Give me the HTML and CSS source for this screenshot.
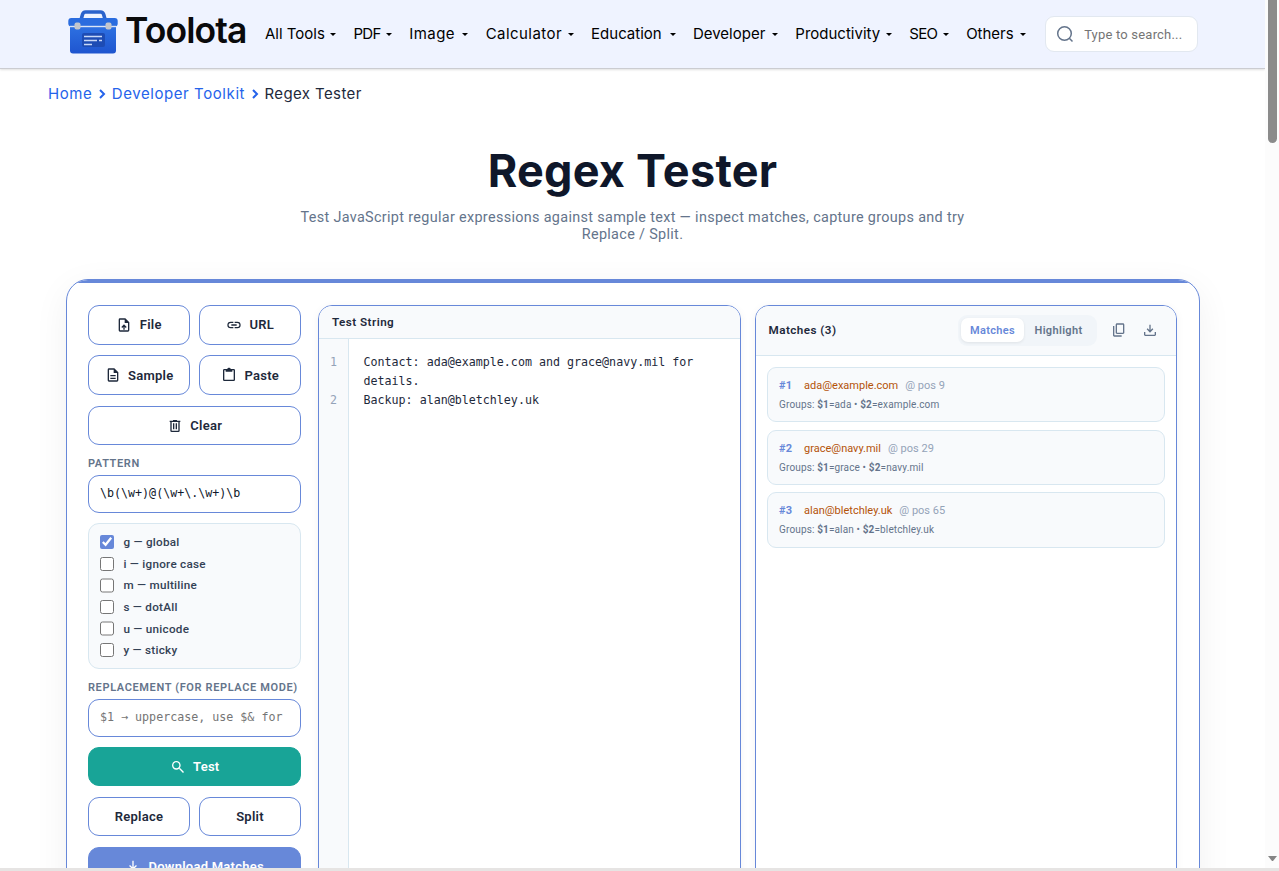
FILE: index.html
```html
<!DOCTYPE html>
<html lang="en">
<head>
    <meta charset="UTF-8">
    <meta name="viewport" content="width=device-width, initial-scale=1.0">
    <title>Regex Tester - Toolota</title>
    <link rel="stylesheet" href="styles.css">
</head>
<body>
    <div class="window">
        <div class="page">
            <header class="site-header">
                <a class="logo" href="#">
                    <svg width="50" height="44" viewBox="0 0 50 44">
                        <defs>
                            <linearGradient id="box" x1="0" y1="0" x2="0" y2="1">
                                <stop offset="0" stop-color="#2f74e4"/>
                                <stop offset="1" stop-color="#1f55cf"/>
                            </linearGradient>
                        </defs>
                        <path d="M13 10L14.500 4.500Q15.200 2 17.500 2h15Q35 2 35.700 4.500L37.200 10" fill="none" stroke="#2a62cc" stroke-width="3.600"/>
                        <rect x="2" y="13" width="46" height="30.500" rx="3" fill="url(#box)"/>
                        <rect x="0.300" y="8" width="49.400" height="8.500" rx="3" fill="#2a6cdf"/>
                        <rect x="2" y="15.800" width="46" height="1.400" fill="#dbe5f6"/>
                        <rect x="14" y="23" width="23" height="14" rx="2" fill="#1d4cb4"/>
                        <rect x="6.500" y="12.500" width="6" height="7" rx="2" fill="#c3c6cc"/>
                        <rect x="37.500" y="12.500" width="6" height="7" rx="2" fill="#c3c6cc"/>
                        <path d="M16 26.500h18M16 30.500h13M31 30.500h3M16 34.500h8" stroke="#c9d9f7" stroke-width="1.300"/>
                    </svg>
                    <span>Toolota</span>
                </a>
                <nav class="main-nav">
                    <a href="#">All Tools</a>
                    <a href="#">PDF</a>
                    <a href="#">Image</a>
                    <a href="#">Calculator</a>
                    <a href="#">Education</a>
                    <a href="#">Developer</a>
                    <a href="#">Productivity</a>
                    <a href="#">SEO</a>
                    <a href="#">Others</a>
                </nav>
                <label class="search">
                    <svg width="18" height="18" viewBox="0 0 18 18" fill="none" stroke="#64748b" stroke-width="1.500">
                        <circle cx="8.500" cy="8.500" r="6.800"/>
                        <path d="M13.300 13.300L16.500 16.500"/>
                    </svg>
                    <input type="text" placeholder="Type to search...">
                </label>
            </header>

            <div class="breadcrumb">
                <a href="#">Home</a>
                <svg width="8" height="10" viewBox="0 0 8 10"><path d="M2 1l4 4-4 4"/></svg>
                <a href="#">Developer Toolkit</a>
                <svg width="8" height="10" viewBox="0 0 8 10"><path d="M2 1l4 4-4 4"/></svg>
                <span>Regex Tester</span>
            </div>

            <section class="hero">
                <h1>Regex Tester</h1>
                <p>Test JavaScript regular expressions against sample text — inspect matches, capture groups and try Replace / Split.</p>
            </section>

            <main class="tool-card">
                <aside class="controls">
                    <div class="btn-grid">
                        <button class="btn">
                            <svg class="icon" viewBox="0 0 24 24"><path d="M14,2L20,8V20A2,2 0 0,1 18,22H6A2,2 0 0,1 4,20V4A2,2 0 0,1 6,2H14M18,20V9H13V4H6V20H18M12,11L16,15L14.600,16.400L13,14.800V19H11V14.800L9.400,16.400L8,15L12,11Z"/></svg>
                            File
                        </button>
                        <button class="btn">
                            <svg class="icon" viewBox="0 0 24 24"><path d="M3.900,12C3.900,10.290 5.290,8.900 7,8.900H11V7H7A5,5 0 0,0 2,12A5,5 0 0,0 7,17H11V15.100H7C5.290,15.100 3.900,13.710 3.900,12M8,13H16V11H8V13M17,7H13V8.900H17C18.710,8.900 20.100,10.290 20.100,12C20.100,13.710 18.710,15.100 17,15.100H13V17H17A5,5 0 0,0 22,12A5,5 0 0,0 17,7Z"/></svg>
                            URL
                        </button>
                        <button class="btn">
                            <svg class="icon" viewBox="0 0 24 24"><path d="M6,2A2,2 0 0,0 4,4V20A2,2 0 0,0 6,22H18A2,2 0 0,0 20,20V8L14,2H6M6,4H13V9H18V20H6V4M8,12V14H16V12H8M8,16V18H16V16H8Z"/></svg>
                            Sample
                        </button>
                        <button class="btn">
                            <svg class="icon" viewBox="0 0 24 24"><path d="M19,3H14.820C14.400,1.840 13.300,1 12,1C10.700,1 9.600,1.840 9.180,3H5A2,2 0 0,0 3,5V19A2,2 0 0,0 5,21H19A2,2 0 0,0 21,19V5A2,2 0 0,0 19,3M7,7H17V5H19V19H5V5H7V7Z"/></svg>
                            Paste
                        </button>
                        <button class="btn wide">
                            <svg class="icon" viewBox="0 0 24 24"><path d="M9,3V4H4V6H5V19A2,2 0 0,0 7,21H17A2,2 0 0,0 19,19V6H20V4H15V3H9M7,6H17V19H7V6M9,8V17H11V8H9M13,8V17H15V8H13Z"/></svg>
                            Clear
                        </button>
                    </div>

                    <label class="field-label" for="pattern">PATTERN</label>
                    <input class="field" id="pattern" type="text" value="\b(\w+)@(\w+\.\w+)\b">

                    <div class="flags">
                        <label><input type="checkbox" checked> g — global</label>
                        <label><input type="checkbox"> i — ignore case</label>
                        <label><input type="checkbox"> m — multiline</label>
                        <label><input type="checkbox"> s — dotAll</label>
                        <label><input type="checkbox"> u — unicode</label>
                        <label><input type="checkbox"> y — sticky</label>
                    </div>

                    <label class="field-label" for="replacement">REPLACEMENT (FOR REPLACE MODE)</label>
                    <input class="field" id="replacement" type="text" placeholder="$1 → uppercase, use $&amp; for">

                    <div class="btn-grid actions">
                        <button class="btn wide test">
                            <svg class="icon" viewBox="0 0 24 24"><path d="M9.500,3A6.500,6.500 0 0,1 16,9.500C16,11.110 15.410,12.590 14.440,13.730L14.710,14H15.500L21,19.500L19.500,21L14,15.500V14.710L13.730,14.440C12.590,15.410 11.110,16 9.500,16A6.500,6.500 0 0,1 3,9.500A6.500,6.500 0 0,1 9.500,3M9.500,5C7,5 5,7 5,9.500C5,12 7,14 9.500,14C12,14 14,12 14,9.500C14,7 12,5 9.500,5Z"/></svg>
                            Test
                        </button>
                        <button class="btn">Replace</button>
                        <button class="btn">Split</button>
                        <button class="btn wide download">
                            <svg class="icon" viewBox="0 0 24 24"><path d="M11,4H13V14L16.500,10.500L17.900,11.900L12,17.800L6.100,11.900L7.500,10.500L11,14V4Z"/></svg>
                            Download Matches
                        </button>
                    </div>
                </aside>

                <section class="panel">
                    <div class="panel-head">Test String</div>
                    <div class="editor">
                        <div class="gutter"><span>1</span><span>2</span></div>
                        <div class="code">
                            <p>Contact: ada@example.com and grace@navy.mil for details.</p>
                            <p>Backup: alan@bletchley.uk</p>
                        </div>
                    </div>
                </section>

                <section class="panel">
                    <div class="panel-head tall">
                        <span>Matches (3)</span>
                        <div class="tabs">
                            <button class="active">Matches</button>
                            <button>Highlight</button>
                        </div>
                        <svg class="head-icon" viewBox="0 0 24 24"><path d="M9,18C8.450,18 7.980,17.800 7.590,17.410C7.200,17.020 7,16.550 7,16V4C7,3.450 7.200,2.980 7.590,2.590C7.980,2.200 8.450,2 9,2H18C18.550,2 19.020,2.200 19.410,2.590C19.800,2.980 20,3.450 20,4V16C20,16.550 19.800,17.020 19.410,17.410C19.020,17.800 18.550,18 18,18H9M9,16H18V4H9V16M5,22C4.450,22 3.980,21.800 3.590,21.410C3.200,21.020 3,20.550 3,20V6H5V20H16V22H5Z"/></svg>
                        <svg class="head-icon" viewBox="0 0 24 24"><path d="M12,16L7,11L8.400,9.550L11,12.150V4H13V12.150L15.600,9.550L17,11L12,16M5,21C4.450,21 3.980,20.800 3.590,20.410C3.200,20.020 3,19.550 3,19V15H5V19H19V15H21V19C21,19.550 20.800,20.020 20.410,20.410C20.020,20.800 19.550,21 19,21H5Z"/></svg>
                    </div>
                    <div class="match-list">
                        <div class="match">
                            <div class="match-top"><b>#1</b><span class="value">ada@example.com</span><span class="pos">@ pos 9</span></div>
                            <div class="groups">Groups: <b>$1</b>=ada • <b>$2</b>=example.com</div>
                        </div>
                        <div class="match">
                            <div class="match-top"><b>#2</b><span class="value">grace@navy.mil</span><span class="pos">@ pos 29</span></div>
                            <div class="groups">Groups: <b>$1</b>=grace • <b>$2</b>=navy.mil</div>
                        </div>
                        <div class="match">
                            <div class="match-top"><b>#3</b><span class="value">alan@bletchley.uk</span><span class="pos">@ pos 65</span></div>
                            <div class="groups">Groups: <b>$1</b>=alan • <b>$2</b>=bletchley.uk</div>
                        </div>
                    </div>
                </section>
            </main>
        </div>
        <div class="scrollbar">
            <div class="thumb"></div>
            <div class="arrow"></div>
        </div>
    </div>
    <div class="bottom-edge"></div>
</body>
</html>
```
FILE: styles.css
```css
* {
    margin: 0;
    padding: 0;
    box-sizing: border-box;
}

body {
    font-family: Roboto, sans-serif;
    background-color: #fff;
    color: #1e293b;
    height: 871px;
    overflow: hidden;
}

a {
    text-decoration: none;
}

.window {
    display: flex;
    height: 868px;
}

.page {
    width: 1265px;
    height: 868px;
    overflow: hidden;
}

.scrollbar {
    width: 14px;
    background-color: #fcfcfc;
    display: flex;
    flex-direction: column;
    justify-content: space-between;
    padding: 0 2px 7px 3px;
}

.thumb {
    height: 143px;
    background-color: #8b8b8b;
    border-radius: 0 0 5px 5px;
}

.arrow {
    border: 4.5px solid transparent;
    border-top: 5px solid #858585;
    border-bottom: 0;
}

.bottom-edge {
    height: 3px;
    background-color: #e6e4e3;
}

/* Header */
.site-header {
    height: 69px;
    padding-left: 68px;
    background-color: #eff3ff;
    border-bottom: 1px solid #cbccd1;
    box-shadow: 0 1px 2px rgba(0, 0, 0, 0.12);
    display: flex;
    align-items: center;
}

.logo {
    width: 197px;
    display: flex;
    gap: 7px;
    align-items: center;
    color: #0a0a0c;
    font: 600 35.5px/38px Inter, sans-serif;
    letter-spacing: -0.9px;
    padding-bottom: 5px;
}

.logo svg {
    flex: none;
}

.logo span {
    padding-bottom: 2px;
}

.main-nav {
    display: grid;
    grid-template-columns: 71px 38.5px 59px 88px 84.5px 85px 96.5px 39.5px 60px;
    column-gap: 17.4px;
    font: 400 15px/24px Inter, sans-serif;
}

.main-nav a {
    display: flex;
    justify-content: space-between;
    align-items: center;
    color: #000;
    white-space: nowrap;
}

.main-nav a:nth-child(2),
.main-nav a:nth-child(8) {
    letter-spacing: -0.7px;
}

.main-nav a:nth-child(3),
.main-nav a:nth-child(4) {
    letter-spacing: 0.45px;
}

.main-nav a::after {
    content: "";
    border: 3px solid transparent;
    border-top: 3.5px solid #000;
    border-bottom: 0;
}

.search {
    display: flex;
    align-items: center;
    gap: 10px;
    width: 153px;
    height: 36px;
    margin-left: 19px;
    padding-left: 10px;
    background-color: #fff;
    border: 1px solid #e2e8f0;
    border-radius: 9px;
}

.search svg {
    flex: none;
}

.search input {
    width: 110px;
    border: none;
    outline: none;
    font: 400 13px Roboto, sans-serif;
    letter-spacing: 0.2px;
    background: none;
}

/* Breadcrumb */
.breadcrumb {
    display: flex;
    align-items: center;
    height: 24px;
    margin: 13px 0 0 48px;
    gap: 5.7px;
    font: 400 15px/24px Inter, sans-serif;
    letter-spacing: 0.58px;
}

.breadcrumb a {
    color: #2563eb;
}

.breadcrumb svg {
    fill: none;
    stroke: #2563eb;
    stroke-width: 2;
}

.breadcrumb span {
    letter-spacing: 0.4px;
}

/* Title */
.hero {
    margin-top: 38px;
    text-align: center;
}

.hero h1 {
    font: 700 45px/54px Inter, sans-serif;
    letter-spacing: 0.25px;
    color: #0f172a;
}

.hero p {
    width: 684px;
    margin: 11px auto 0;
    font-size: 14.4px;
    line-height: 17px;
    letter-spacing: 0.33px;
    color: #64748b;
}

/* Tool */
.tool-card {
    position: relative;
    display: grid;
    grid-template-columns: 216px 423px 422px;
    column-gap: 14px;
    width: 1134px;
    height: 700px;
    margin: 36px 0 0 66px;
    padding: 25px 21px;
    border: 1px solid #6788d9;
    border-radius: 22px;
    overflow: hidden;
    box-shadow: 0 9px 36px rgba(0, 0, 0, 0.06);
}

.tool-card::before {
    content: "";
    position: absolute;
    top: 0;
    left: 0;
    right: 0;
    height: 3px;
    background-color: #6788d9;
}

.controls {
    width: 213px;
}

.btn-grid {
    display: grid;
    grid-template-columns: 1fr 1fr;
    grid-auto-rows: 39.6px;
    gap: 10.8px 9px;
}

.btn {
    display: flex;
    align-items: center;
    justify-content: center;
    gap: 7.5px;
    background-color: #fff;
    border: 1px solid #6788d9;
    border-radius: 11px;
    font: 600 13px Roboto, sans-serif;
    letter-spacing: 0.25px;
    color: #1e293b;
}

.wide {
    grid-column: span 2;
}

.icon {
    width: 16px;
    height: 16px;
    fill: currentColor;
}

.test {
    background-color: #18a497;
    border-color: #18a497;
    color: #fff;
}

.download {
    background-color: #6788d9;
    color: #fff;
}

.field-label {
    display: block;
    margin-top: 11.4px;
    font-size: 11px;
    line-height: 14px;
    font-weight: 600;
    letter-spacing: 0.63px;
    color: #64748b;
    white-space: nowrap;
}

.field {
    display: block;
    width: 100%;
    height: 37.5px;
    margin-top: 4.6px;
    padding: 0 11px 2px;
    background-color: #fff;
    border: 1px solid #6788d9;
    border-radius: 11px;
    font: 11.66px "DejaVu Sans Mono", monospace;
    color: #0f172a;
}

.field::placeholder {
    color: #757575;
}

.flags {
    display: flex;
    flex-direction: column;
    justify-content: space-between;
    height: 146px;
    margin-top: 10.3px;
    padding: 10px 11px;
    background-color: #f8fafc;
    border: 1px solid #d8e7f0;
    border-radius: 11px;
}

.flags label {
    display: flex;
    align-items: center;
    gap: 9px;
    font-size: 11.7px;
    line-height: 16px;
    font-weight: 500;
    letter-spacing: 0.27px;
    color: #334155;
}

.flags input {
    width: 14.4px;
    height: 14.4px;
    accent-color: #6788d9;
}

.actions {
    margin-top: 10.3px;
    grid-auto-rows: 39.4px;
    row-gap: 10.4px;
}

/* Panels */
.panel {
    border: 1px solid #6788d9;
    border-radius: 14px;
    overflow: hidden;
    height: 640px;
    box-shadow: 0 2px 9px rgba(15, 23, 42, 0.05);
    background-color: #fff;
}

.panel-head {
    display: flex;
    align-items: center;
    height: 33px;
    padding: 0 13px;
    background-color: #f8fafc;
    border-bottom: 1px solid #d8e7f0;
    font-size: 11.7px;
    font-weight: 600;
    letter-spacing: 0.45px;
}

.tall {
    height: 50px;
    padding: 0 18.5px 1px 12.5px;
}

.tall > span {
    flex: 1;
}

.tabs {
    display: flex;
    padding: 3.5px;
    margin-right: 14px;
    width: 139px;
    height: 31px;
    background-color: #f1f5f9;
    border-radius: 9px;
}

.tabs button {
    flex: 1;
    border: none;
    border-radius: 7px;
    background: none;
    font: 600 11px Roboto, sans-serif;
    letter-spacing: 0.35px;
    color: #64748b;
}

.tabs .active {
    flex: 0 0 63px;
    background-color: #fff;
    color: #6788d9;
    box-shadow: 0 1px 3px rgba(0, 0, 0, 0.08);
}

.head-icon {
    width: 16px;
    height: 16px;
    fill: #64748b;
}

.head-icon + .head-icon {
    margin-left: 15px;
}

.editor {
    display: flex;
    height: 100%;
    font: 11.66px/19px "DejaVu Sans Mono", monospace;
}

.gutter {
    display: flex;
    flex-direction: column;
    gap: 19px;
    width: 30px;
    padding: 14px 11px 0 0;
    text-align: right;
    background-color: #f8fafc;
    border-right: 1px solid #d8e7f0;
    color: #94a3b8;
}

.code {
    flex: 1;
    padding: 14px 14px 14px 14.5px;
}

.match-list {
    display: flex;
    flex-direction: column;
    gap: 7.2px;
    padding: 11px;
}

.match {
    height: 55.4px;
    padding: 10px 11px;
    background-color: #f8fafc;
    border: 1px solid #d8e7f0;
    border-radius: 9px;
}

.match-top {
    display: flex;
    font-size: 11px;
    line-height: 15px;
}

.match-top b {
    width: 25px;
    color: #6788d9;
    letter-spacing: 0.3px;
}

.value {
    color: #b45309;
    margin-right: 7px;
}

.pos {
    color: #94a3b8;
}

.groups {
    margin-top: 5px;
    font-size: 10px;
    line-height: 13px;
    letter-spacing: 0.14px;
    color: #64748b;
}
```
